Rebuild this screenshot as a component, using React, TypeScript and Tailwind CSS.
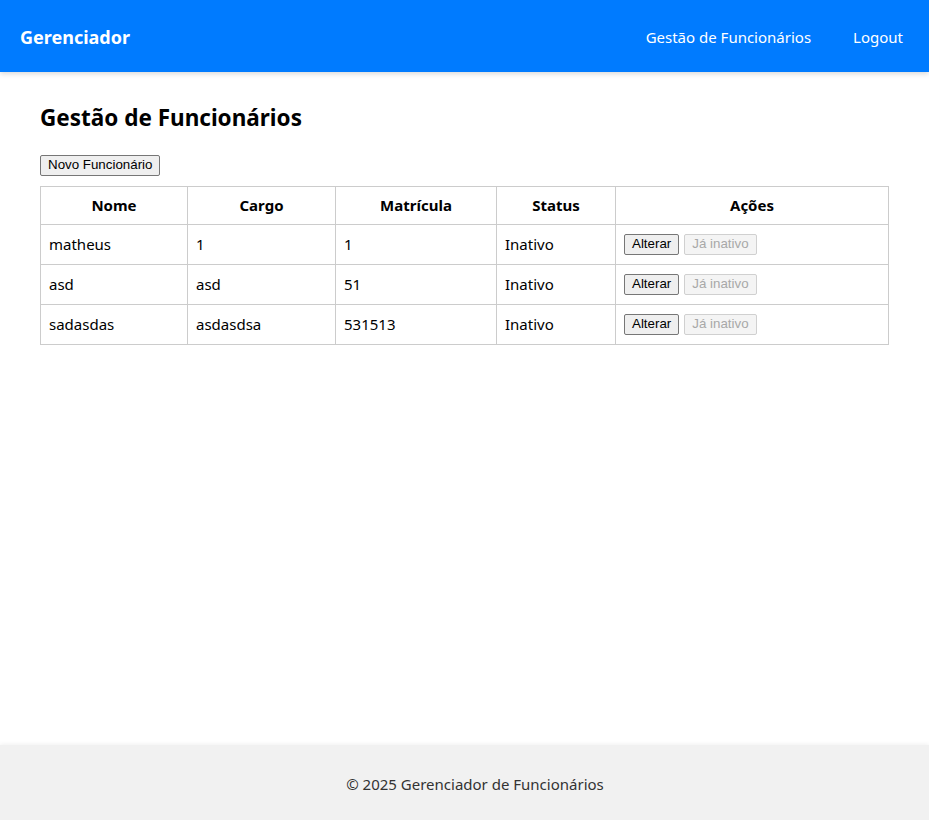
const rows = [
  { nome: 'matheus', cargo: '1', matricula: '1', status: 'Inativo' },
  { nome: 'asd', cargo: 'asd', matricula: '51', status: 'Inativo' },
  { nome: 'sadasdas', cargo: 'asdasdsa', matricula: '531513', status: 'Inativo' },
];

const btn =
  "font-['Liberation_Sans',Arial,sans-serif] text-[13.333px] leading-[16px] px-[7px] py-[1.5px] rounded-[2px] border";

export default function App() {
  return (
    <div className="min-h-screen flex flex-col bg-white text-black font-['Noto_Sans','Open_Sans',sans-serif]">
      <header className="h-[72px] bg-[#007bff] text-white px-5 flex items-center justify-between shadow-[0_2px_5px_rgba(0,0,0,0.15)] relative z-10">
        <h1 className="text-[18px] font-bold mt-[2px]">Gerenciador</h1>
        <nav className="flex items-center gap-[42px] pr-[6px] mt-[2px]">
          <a className="text-[15px]">Gestão de Funcionários</a>
          <a className="text-[15px]">Logout</a>
        </nav>
      </header>

      <main className="flex-1 px-10 pt-[30px]">
        <h2 className="text-[22.5px] font-bold leading-[32px] mb-[17px]">Gestão de Funcionários</h2>
        <button className={`${btn} bg-[#efefef] border-[#767676] text-black mb-[10px]`}>Novo Funcionário</button>
        <table className="w-full border-collapse text-[15px]">
          <thead>
            <tr className="h-[38px]">
              <th className="border border-[#ccc] px-2 w-[147px] font-bold">Nome</th>
              <th className="border border-[#ccc] px-2 w-[148px] font-bold">Cargo</th>
              <th className="border border-[#ccc] px-2 w-[161px] font-bold">Matrícula</th>
              <th className="border border-[#ccc] px-2 w-[119px] font-bold">Status</th>
              <th className="border border-[#ccc] px-2 font-bold">Ações</th>
            </tr>
          </thead>
          <tbody>
            {rows.map((r) => (
              <tr key={r.nome} className="h-[40px]">
                <td className="border border-[#ccc] px-2">{r.nome}</td>
                <td className="border border-[#ccc] px-2">{r.cargo}</td>
                <td className="border border-[#ccc] px-2">{r.matricula}</td>
                <td className="border border-[#ccc] px-2">{r.status}</td>
                <td className="border border-[#ccc] px-2">
                  <div className="flex items-center gap-[5px]">
                    <button className={`${btn} bg-[#efefef] border-[#767676] text-black`}>Alterar</button>
                    <button disabled className={`${btn} bg-[#f4f4f4] border-[#d0d0d0] text-[#a8a8a8]`}>
                      Já inativo
                    </button>
                  </div>
                </td>
              </tr>
            ))}
          </tbody>
        </table>
      </main>

      <footer className="h-[75px] bg-[#f1f1f1] text-[#333] flex items-center justify-center pl-[21px] pt-[3px] shadow-[0_-1px_4px_rgba(0,0,0,0.06)] text-[15px]">
        © 2025 Gerenciador de Funcionários
      </footer>
    </div>
  );
}
